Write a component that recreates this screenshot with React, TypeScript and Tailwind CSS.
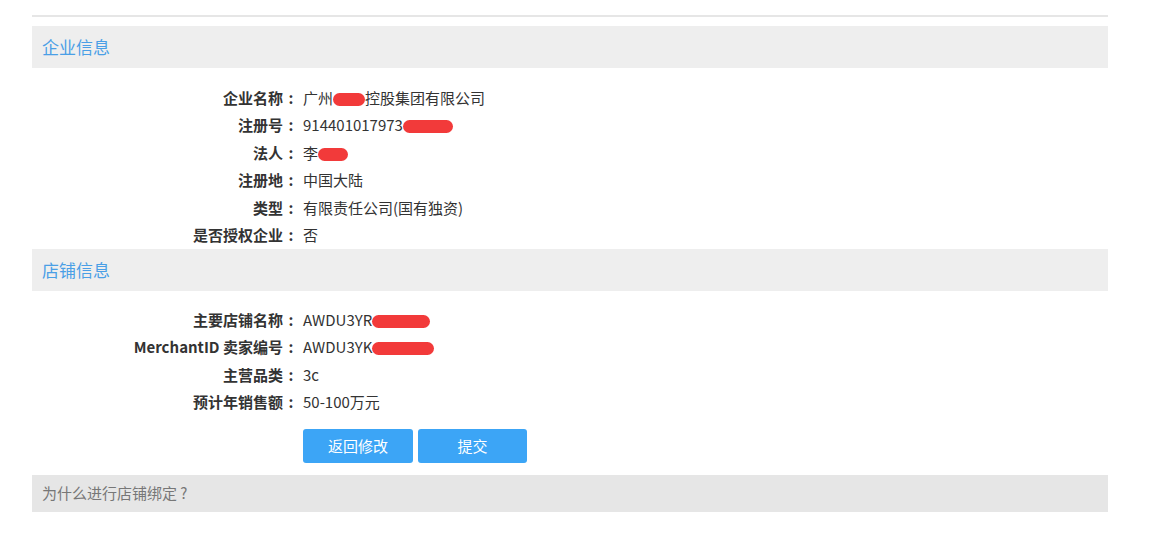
import React from 'react';

type Row = { label: string; value: React.ReactNode };

function Blob({ w }: { w: string }) {
  return <span className={`inline-block h-[13px] rounded-full bg-[#f23a3a] align-middle ${w}`} />;
}

const companyRows: Row[] = [
  { label: '企业名称', value: <>广州<Blob w="w-[32px]" />控股集团有限公司</> },
  { label: '注册号', value: <>914401017973<Blob w="w-[50px]" /></> },
  { label: '法人', value: <>李<Blob w="w-[30px]" /></> },
  { label: '注册地', value: '中国大陆' },
  { label: '类型', value: '有限责任公司(国有独资)' },
  { label: '是否授权企业', value: '否' },
];

const storeRows: Row[] = [
  { label: '主要店铺名称', value: <>AWDU3YR<Blob w="w-[58px]" /></> },
  { label: 'MerchantID 卖家编号', value: <>AWDU3YK<Blob w="w-[62px]" /></> },
  { label: '主营品类', value: '3c' },
  { label: '预计年销售额', value: '50-100万元' },
];

function SectionHeader({ title, className }: { title: string; className: string }) {
  return (
    <div className={`flex items-center bg-[#eeeeee] px-[10px] text-[17px] text-[#4a9fe6] ${className}`}>
      {title}
    </div>
  );
}

function InfoRows({ rows }: { rows: Row[] }) {
  return (
    <div className="flex flex-col">
      {rows.map((row) => (
        <div key={row.label} className="flex h-[27.5px] items-center text-[15px] text-[#333]">
          <div className="flex w-[267px] shrink-0 justify-end font-bold">
            <span>{row.label}</span>
            <span className="inline-block w-[16px] text-center">:</span>
          </div>
          <div className="ml-[4px] whitespace-nowrap">{row.value}</div>
        </div>
      ))}
    </div>
  );
}

export default function App() {
  return (
    <div
      className="h-[536px] w-[1152px] bg-white pt-[15px]"
      style={{ fontFamily: '"Noto Sans CJK SC", "Noto Sans", sans-serif' }}
    >
      <div className="ml-[32px] w-[1076px]">
        <div className="h-[2px] bg-[#e6e6e6]" />
        <SectionHeader title="企业信息" className="mt-[9px] h-[42px]" />
        <div className="pt-[16px]">
          <InfoRows rows={companyRows} />
        </div>
        <SectionHeader title="店铺信息" className="h-[42px]" />
        <div className="pt-[15px]">
          <InfoRows rows={storeRows} />
        </div>
        <div className="mt-[13px] flex gap-[5px] pl-[271px]">
          <button className="h-[34px] w-[110px] rounded-[3px] bg-[#3ca5f6] text-[15px] text-white">返回修改</button>
          <button className="h-[34px] w-[109px] rounded-[3px] bg-[#3ca5f6] text-[15px] text-white">提交</button>
        </div>
        <div className="mt-[12px] flex h-[37px] items-center bg-[#e6e6e6] px-[10px] text-[15px] text-[#777]">
          为什么进行店铺绑定 ?
        </div>
      </div>
    </div>
  );
}
